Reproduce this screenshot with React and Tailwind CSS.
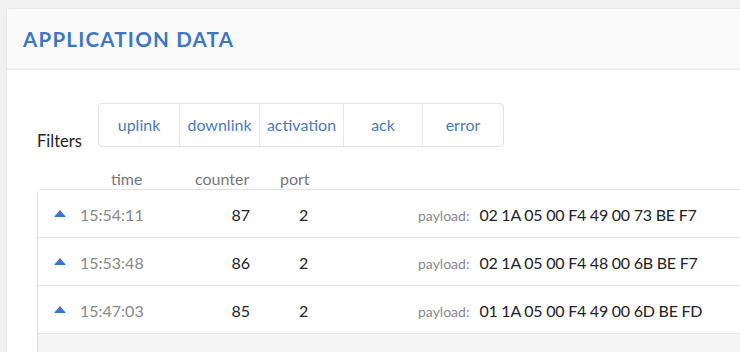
import React from 'react';

const filters = [
  { label: 'uplink', w: 'w-[80px]' },
  { label: 'downlink', w: 'w-[80px]' },
  { label: 'activation', w: 'w-[84px]' },
  { label: 'ack', w: 'w-[79px]' },
  { label: 'error', w: 'w-[81px]' },
];

const rows = [
  { time: '15:54:11', counter: 87, port: 2, payload: '02 1A 05 00 F4 49 00 73 BE F7' },
  { time: '15:53:48', counter: 86, port: 2, payload: '02 1A 05 00 F4 48 00 6B BE F7' },
  { time: '15:47:03', counter: 85, port: 2, payload: '01 1A 05 00 F4 49 00 6D BE FD' },
];

const App = () => {
  return (
    <div className="w-[740px] h-[352px] overflow-hidden bg-[#f0f0f0] pl-[6px] pt-[8px] font-['Lato','Liberation_Sans',sans-serif]">
      <div className="w-[760px] h-[360px] bg-white border border-[#e6e6e6] rounded-tl-[3px]">
        <div className="h-[61px] bg-[#fafafa] border-b-2 border-[#ececec] flex items-center pl-[16px]">
          <h1 className="text-[20.5px] font-bold tracking-[0.06em] text-[#3d76c6] leading-none mt-[1px]">
            APPLICATION DATA
          </h1>
        </div>

        <div className="pl-[30px] pt-[33px]">
          <div className="flex items-end">
            <span className="text-[16.5px] text-[#222] w-[61px] mb-[-7px]">Filters</span>
            <div className="flex h-[44px] border border-[#e3e3e3] rounded-[4px]">
              {filters.map((f, i) => (
                <button
                  key={f.label}
                  className={`${f.w} flex items-center justify-center text-[16px] text-[#4a7bbd] ${i > 0 ? 'border-l border-[#e8e8e8]' : ''}`}
                >
                  {f.label}
                </button>
              ))}
            </div>
          </div>

          <div className="flex text-[16px] text-[#777] mt-[22px] h-[19px] leading-[19px]">
            <span className="ml-[74px] w-[84px]">time</span>
            <span className="w-[85px]">counter</span>
            <span>port</span>
          </div>

          <div className="mt-[1px] border border-[#e2e2e2] rounded-tl-[4px] bg-[#f5f5f5] h-[200px]">
            {rows.map((r) => (
              <div key={r.time} className="h-[48px] pt-[3px] bg-white border-b border-[#e8e8e8] flex items-center">
                <svg width="12" height="7" viewBox="0 0 12 7" className="ml-[16px] mt-[-3px]">
                  <polygon points="6,0 12,7 0,7" fill="#3d76c6" />
                </svg>
                <span className="ml-[14px] w-[95px] text-[16px] text-[#888]">{r.time}</span>
                <span className="w-[75px] text-right text-[16px] text-[#222]">{r.counter}</span>
                <span className="ml-[49px] w-[119px] text-[16px] text-[#222]">{r.port}</span>
                <span className="text-[14px] text-[#888]">payload:</span>
                <span className="ml-[10px] text-[16px] text-[#222] tracking-[-0.015em]">{r.payload}</span>
              </div>
            ))}
          </div>
        </div>
      </div>
    </div>
  );
};

export default App;
